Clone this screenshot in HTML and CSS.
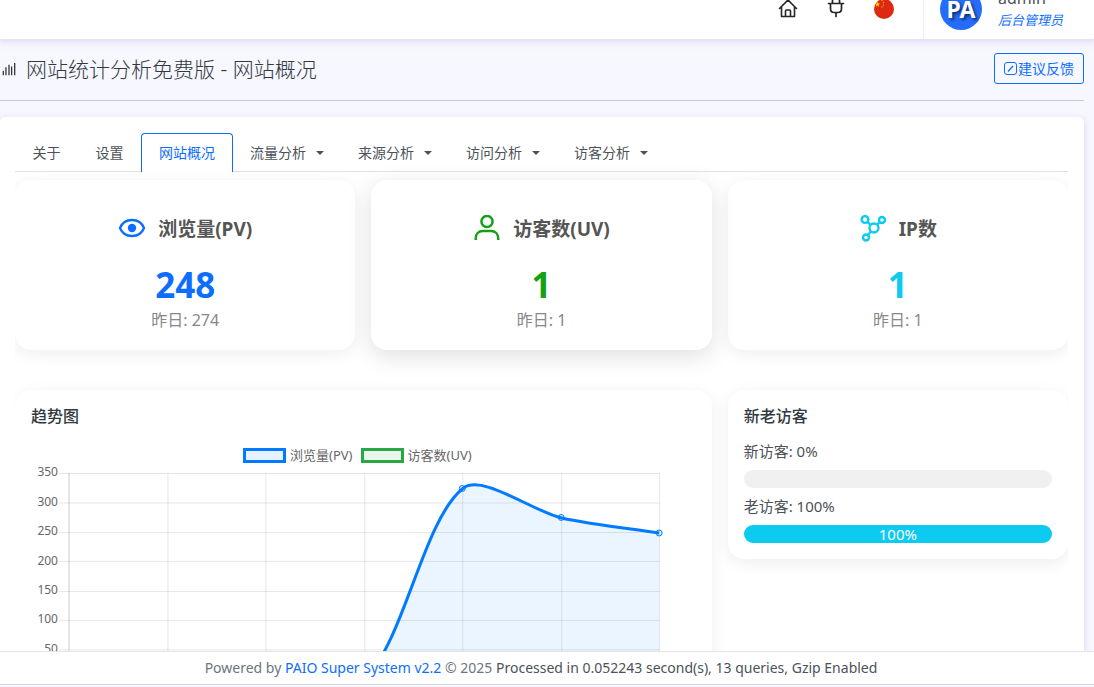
FILE: index.html
```html
<!DOCTYPE html>
<html lang="zh-CN">
<head>
<meta charset="utf-8">
<meta name="viewport" content="width=device-width, initial-scale=1">
<title>网站统计分析免费版 - 网站概况</title>
<link rel="stylesheet" href="styles.css">
</head>
<body>
<header class="topbar">
  <nav class="topbar-icons" aria-label="快捷入口">
    <a href="#" class="icon-link" aria-label="首页">
      <svg width="20" height="20" viewBox="0 0 20 20" fill="none" stroke="#262626" stroke-width="1.6" stroke-linecap="round" stroke-linejoin="round"><path d="M1.500 9.500 10 1l8.500 8.500M3.500 8V17.500h13V8M7.500 17.500V12q0-1 1-1h3q1 0 1 1v5.500"/></svg>
    </a>
    <a href="#" class="icon-link" aria-label="插件">
      <svg width="20" height="20" viewBox="0 0 20 20" fill="none" stroke="#262626" stroke-width="1.700" stroke-linecap="round" stroke-linejoin="round"><path d="M6.500 0v4M13.500 0v4M2.500 4.500h15M4.500 4.500v5q0 4 3.500 4h4q3.500 0 3.500-4v-5M10 13.500V17.500"/></svg>
    </a>
    <a href="#" class="icon-link" aria-label="语言">
      <svg width="20" height="20" viewBox="0 0 20 20"><circle cx="10" cy="10" r="10" fill="#de2910"/><path d="m3.500 2.500.7 2 2.100 0-1.700 1.300.6 2-1.700-1.200-1.700 1.200.6-2L.9 4.500l2 0z" fill="#ffde00"/><g fill="#f5a623"><circle cx="8" cy="1.500" r=".7"/><circle cx="9.500" cy="3.500" r=".7"/><circle cx="9.500" cy="6" r=".7"/><circle cx="8" cy="8" r=".7"/></g></svg>
    </a>
  </nav>
  <a href="#" class="user">
    <span class="avatar">PA</span>
    <span class="user-text">
      <span class="user-name">admin</span>
      <em class="user-role">后台管理员</em>
    </span>
  </a>
</header>

<main class="page">
  <div class="page-head">
    <svg class="bars-icon" width="14" height="14" viewBox="0 0 16 16" fill="none" stroke="#32393f" stroke-width="1.500"><path d="M1.500 15v-5M4.500 15V6M8 15V3M11 15V5M14.500 15V1"/></svg>
    <h1 class="page-title">网站统计分析免费版 - 网站概况</h1>
    <button type="button" class="feedback">
      <svg width="13" height="13" viewBox="0 0 13 13" fill="none" stroke="currentColor"><path d="M10 .5H3Q.5.500.500 3v7q0 2.500 2.500 2.500h7q2.500 0 2.500-2.500V3Q12.500.500 10 .5z"/><path d="M4 9.500 9 4" stroke-width="1.300"/></svg>建议反馈
    </button>
  </div>

  <section class="panel">
    <nav class="tabs" aria-label="统计">
      <a href="#" class="tab">关于</a>
      <a href="#" class="tab">设置</a>
      <a href="#" class="tab tab-active" aria-current="page">网站概况</a>
      <button type="button" class="tab tab-menu">流量分析</button>
      <button type="button" class="tab tab-menu">来源分析</button>
      <button type="button" class="tab tab-menu">访问分析</button>
      <button type="button" class="tab tab-menu">访客分析</button>
    </nav>

    <div class="grid">
      <article class="card stat stat-pv">
        <h2 class="stat-title">
          <svg width="28" height="28" viewBox="0 0 28 28" fill="none" stroke="currentColor" stroke-width="2.300"><path d="M2 13C4 8 8.500 5 14 5s10 3 12 8c-2 5-6.500 8-12 8s-10-3-12-8z"/><circle cx="14" cy="13" r="4.200" fill="currentColor" stroke="none"/></svg>
          <span class="stat-label">浏览量(PV)</span>
        </h2>
        <p class="stat-value">248</p>
        <p class="stat-sub">昨日: 274</p>
      </article>
      <article class="card card-raised stat stat-uv">
        <h2 class="stat-title">
          <svg width="28" height="28" viewBox="0 0 28 28" fill="none" stroke="currentColor" stroke-width="2.500"><circle cx="14" cy="6.500" r="5.600"/><path d="M2.700 25v-1.500c0-4.500 3-7.500 7-7.500h8.500c4 0 7 3 7 7.500V25"/></svg>
          <span class="stat-label">访客数(UV)</span>
        </h2>
        <p class="stat-value">1</p>
        <p class="stat-sub">昨日: 1</p>
      </article>
      <article class="card stat stat-ip">
        <h2 class="stat-title">
          <svg width="28" height="28" viewBox="0 0 28 28" fill="none" stroke="currentColor" stroke-width="2.400"><circle cx="15" cy="13" r="4.500"/><circle cx="6" cy="4.500" r="3.400"/><circle cx="23" cy="5" r="3"/><circle cx="7" cy="22.500" r="3"/><path d="m8.400 6.900 3.300 3M20.800 7.200l-2.500 2.500M11.800 16.300l-2.600 3.900"/></svg>
          <span class="stat-label">IP数</span>
        </h2>
        <p class="stat-value">1</p>
        <p class="stat-sub">昨日: 1</p>
      </article>
    </div>

    <div class="grid grid-detail">
      <article class="card block block-wide">
        <h2 class="block-title">趋势图</h2>
        <div class="chart">
          <div class="legend">
            <span class="legend-item"><i class="swatch swatch-pv"></i>浏览量(PV)</span>
            <span class="legend-item"><i class="swatch swatch-uv"></i>访客数(UV)</span>
          </div>
          <svg class="plot" viewBox="0 0 653 240" role="img" aria-label="浏览量与访客数趋势">
            <g class="grid-lines">
              <path d="M28 9.500H629M28 39H629M28 68.500H629M28 97.500H629M28 127.500H629M28 156.500H629M28 186H629M28 215.500H629"/>
              <path d="M137 9v206M235 9v206M334 9v206M432 9v206M531 9v206M629 9v206"/>
              <path class="axis" d="M38 9v206"/>
            </g>
            <g class="ticks">
              <text x="27" y="12">350</text>
              <text x="27" y="42">300</text>
              <text x="27" y="71">250</text>
              <text x="27" y="101">200</text>
              <text x="27" y="130">150</text>
              <text x="27" y="159">100</text>
              <text x="27" y="189">50</text>
              <text x="27" y="218">0</text>
            </g>
            <path class="area" d="M38 215H334C374 176 392 57 432 24.500C451 9 501 47 531 54C560 60.500 599 64.500 628.500 69V215z"/>
            <path class="line" d="M38 215H334C374 176 392 57 432 24.500C451 9 501 47 531 54C560 60.500 599 64.500 628.500 69"/>
            <g class="points"><circle cx="431.500" cy="24.500" r="3"/><circle cx="530.500" cy="53.500" r="3"/><circle cx="628.500" cy="69" r="3"/></g>
          </svg>
        </div>
      </article>

      <article class="card block">
        <h2 class="block-title">新老访客</h2>
        <p class="meter-label">新访客: 0%</p>
        <div class="meter" role="progressbar" aria-label="新访客" aria-valuenow="0" aria-valuemin="0" aria-valuemax="100"><div class="meter-fill" style="width:0%"></div></div>
        <p class="meter-label">老访客: 100%</p>
        <div class="meter" role="progressbar" aria-label="老访客" aria-valuenow="100" aria-valuemin="0" aria-valuemax="100"><div class="meter-fill" style="width:100%">100%</div></div>
      </article>
    </div>
  </section>
</main>

<footer class="footer">
  <p class="footer-text">Powered by <a href="#">PAIO Super System v2.2</a> © 2025 <span class="footer-info">Processed in 0.052243 second(s), 13 queries, Gzip Enabled</span></p>
</footer>
</body>
</html>
```
FILE: styles.css
```css
* {
  box-sizing: border-box;
}

body {
  margin: 0;
  height: 100vh;
  display: flex;
  flex-direction: column;
  overflow: hidden;
  background: #f7f7ff;
  color: #4c5258;
  font: 14px/22px "Noto Sans", "Noto Sans CJK SC", sans-serif;
}

h1,
h2,
p {
  margin: 0;
}

a {
  color: #0d6efd;
  text-decoration: none;
}

button {
  font: inherit;
  cursor: pointer;
}

svg {
  flex: none;
  display: block;
}

/* Top bar */
.topbar {
  position: relative;
  z-index: 2;
  flex: none;
  height: 39px;
  display: flex;
  align-items: flex-end;
  justify-content: flex-end;
  background: #fff;
  box-shadow: 0 2px 6px rgba(218, 218, 253, 0.65), 0 2px 6px rgba(206, 206, 238, 0.54);
}

.topbar-icons {
  display: flex;
  gap: 28px;
  padding: 0 29px 20px 0;
}

.icon-link {
  display: block;
}

.user {
  display: flex;
  align-items: flex-end;
  gap: 16px;
  height: 39px;
  padding: 0 31px 9px 16px;
  border-left: 1px solid #ededed;
}

.avatar {
  flex: none;
  width: 42px;
  height: 42px;
  border-radius: 50%;
  background: #246cf9;
  color: #fff;
  font-size: 23px;
  font-weight: 700;
  line-height: 42px;
  text-align: center;
  text-shadow: 2px 2px 3px rgba(0, 0, 0, 0.55);
}

.user-text {
  display: flex;
  flex-direction: column;
}

.user-name {
  color: #4c5258;
  font-size: 16px;
  line-height: 24px;
}

.user-role {
  font-size: 13px;
  line-height: 20px;
}

/* Page heading */
.page {
  flex: 1;
  min-height: 0;
  overflow: hidden;
  padding-right: 10px;
}

.page-head {
  display: flex;
  align-items: center;
  padding: 14px 0 16px;
  margin-bottom: 16px;
  border-bottom: 1px solid #c9c9d3;
}

.bars-icon {
  margin: 0 10px 0 2px;
}

.page-title {
  flex: 1;
  color: #32393f;
  font-size: 21px;
  font-weight: 300;
  line-height: 30px;
}

.feedback {
  display: flex;
  align-items: center;
  gap: 1px;
  padding: 4px 9px;
  border: 1px solid #0d6efd;
  border-radius: 3px;
  background: transparent;
  color: #0d6efd;
  line-height: 21px;
}

/* Panel */
.panel {
  padding: 16px 16px 40px 15px;
  border-radius: 5px;
  background: #fff;
  box-shadow: 0 2px 6px rgba(218, 218, 253, 0.65), 0 2px 6px rgba(206, 206, 238, 0.54);
}

.tabs {
  display: flex;
  border-bottom: 1px solid #dee2e6;
}

.tab {
  min-width: 63px;
  margin-bottom: -1px;
  padding: 8px 16px;
  border: 1px solid transparent;
  border-bottom: 0;
  border-radius: 4px 4px 0 0;
  background: transparent;
  color: #4c5258;
  text-align: center;
}

.tab-active {
  min-width: 92px;
  border-color: #0d6efd;
  background: #fff;
  color: #0d6efd;
}

.tab-menu {
  display: flex;
  align-items: center;
  gap: 10px;
}

.tab-menu::after {
  content: "";
  border: 4px solid transparent;
  border-top-color: currentColor;
  border-bottom: 0;
}

.grid {
  display: grid;
  grid-template-columns: repeat(3, minmax(0, 1fr));
  align-items: start;
  gap: 16px;
  padding-top: 8px;
  overflow-x: clip;
}

.grid-detail {
  padding-top: 40px;
}

.card {
  border-radius: 16px;
  background: #fff;
  box-shadow: 0 4px 16px rgba(0, 0, 0, 0.07);
}

.card-raised {
  position: relative;
  box-shadow: 0 6px 24px rgba(0, 0, 0, 0.13);
}

/* Stat cards */
.stat {
  padding: 33px 16px 18px;
  text-align: center;
}

.stat-title {
  display: flex;
  align-items: center;
  justify-content: center;
  gap: 12px;
  margin-bottom: 19px;
  font-size: 19px;
  line-height: 32px;
}

.stat-label {
  color: #555;
}

.stat-value {
  margin-bottom: 2px;
  font-size: 35px;
  font-weight: 700;
  line-height: 42px;
}

.stat-sub {
  color: #888;
  font-size: 16px;
  line-height: 24px;
}

.stat-pv {
  color: #0d6efd;
}

.stat-uv {
  color: #15a015;
}

.stat-ip {
  color: #0dcaf0;
}

/* Detail blocks */
.block {
  padding: 14px 16px 16px;
}

.block-wide {
  grid-column: span 2;
}

.block-title {
  margin-bottom: 12px;
  color: #32393f;
  font-size: 16px;
  font-weight: 500;
  line-height: 24px;
}

.meter-label {
  margin-bottom: 8px;
  font-size: 15px;
}

.meter {
  height: 18px;
  border-radius: 9px;
  background: #f0f0f0;
  overflow: hidden;
}

.meter + .meter-label {
  margin-top: 7px;
}

.meter-fill {
  background: #0dcaf0;
  color: #fff;
  font-size: 15px;
  line-height: 18px;
  text-align: center;
}

/* Trend chart */
.chart {
  margin-right: 12px;
  padding-top: 6px;
}

.legend {
  display: flex;
  justify-content: center;
  gap: 8px;
  color: #666;
  font-size: 13px;
  line-height: 18px;
}

.legend-item {
  display: flex;
  align-items: center;
  gap: 4px;
}

.swatch {
  width: 43px;
  height: 15px;
  border: 3px solid;
}

.swatch-pv {
  border-color: #007bff;
  background: #e6f2ff;
}

.swatch-uv {
  border-color: #28a745;
  background: #e9f6ec;
}

.plot {
  width: 100%;
}

.grid-lines {
  fill: none;
  stroke: rgba(0, 0, 0, 0.1);
}

.axis {
  stroke: rgba(0, 0, 0, 0.2);
}

.ticks {
  fill: #666;
  font-size: 12px;
  text-anchor: end;
}

.area {
  fill: rgba(0, 123, 255, 0.08);
}

.line {
  fill: none;
  stroke: #007bff;
  stroke-width: 3;
}

.points {
  fill: rgba(0, 123, 255, 0.1);
  stroke: #007bff;
}

/* Footer */
.footer {
  position: relative;
  z-index: 2;
  flex: none;
  margin-bottom: 2px;
  padding: 6px 12px 6px 0;
  border-top: 1px solid #e4e4e4;
  border-bottom: 1px solid #d8d8d8;
  background: #fff;
  text-align: center;
}

.footer-text {
  color: #6c757d;
  font-size: 14px;
  line-height: 20px;
}

.footer-info {
  color: #4c5258;
}
```
